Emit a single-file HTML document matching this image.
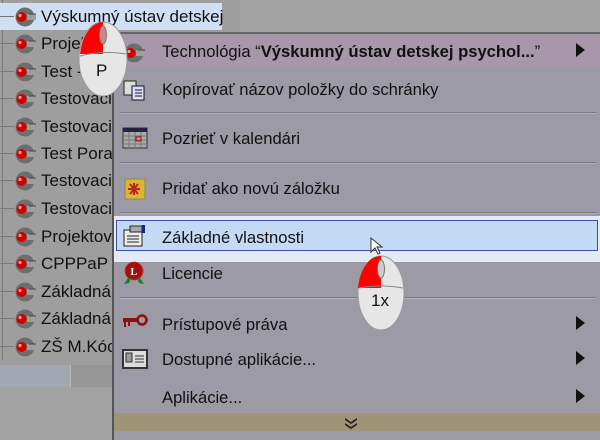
<!DOCTYPE html>
<html><head><meta charset="utf-8"><style>
body{margin:0;width:600px;height:438px;overflow:hidden;background:#a2a2a2;font-family:"Liberation Sans",sans-serif;position:relative}
.a{position:absolute}
.tree{left:0;top:0;width:240px;height:365px;background:#9e9e9e}
.row{position:absolute;left:0;height:27px;font-size:17px;color:#111;line-height:27px;white-space:nowrap}
.row .ic{position:absolute;left:13px;top:4px}
.row span{position:absolute;left:41px}
.row .ln{position:absolute;left:0;top:13px;width:14px;border-top:1px solid #777}
.menu{left:112px;top:32px;width:488px;height:406px;background:#9c9aa4;border-left:2px solid #555;border-top:2px solid #666}
.it{position:absolute;left:48px;font-size:16.6px;color:#111;white-space:nowrap}
.sep{position:absolute;left:6px;right:6px;height:0;border-top:1px solid #7a7a82;border-bottom:1px solid #b0b0b8}
.arr{position:absolute;left:462px;width:0;height:0;border-top:7px solid transparent;border-bottom:7px solid transparent;border-left:9px solid #111}
.mi{position:absolute;left:8px}
</style></head><body>
<div class="a tree"></div>
<div class="a" style="left:2px;top:0;width:1px;height:360px;background:#777"></div>
<div class="a" style="left:0;top:3px;width:222px;height:27px;background:#d0e0f4"></div>
<div class="a" style="left:0;top:365px;width:70px;height:22px;background:#a2a8b2"></div>
<div class="a" style="left:70px;top:365px;width:42px;height:22px;background:#979797;border-left:1px solid #bbb"></div>

<svg width="0" height="0" style="position:absolute"><defs>
<g id="lg"><circle cx="12" cy="10" r="9.5" fill="#6e6e6e"/><path d="M14 7h9v6h-9z" fill="#9e9e9e"/><path d="M16 7h7" stroke="#444"/><circle cx="8.5" cy="10" r="5" fill="#d00000"/><circle cx="7" cy="8.5" r="1.6" fill="#f99"/></g>
</defs></svg>

<div class="row" style="top:3px"><div class="ln"></div><svg class="ic" width="26" height="20"><use href="#lg"/></svg><span>Výskumný ústav detskej</span></div>
<div class="row" style="top:30px"><div class="ln"></div><svg class="ic" width="26" height="20"><use href="#lg"/></svg><span>Projekt</span></div>
<div class="row" style="top:58px"><div class="ln"></div><svg class="ic" width="26" height="20"><use href="#lg"/></svg><span>Test -</span></div>
<div class="row" style="top:85px"><div class="ln"></div><svg class="ic" width="26" height="20"><use href="#lg"/></svg><span>Testovaci</span></div>
<div class="row" style="top:113px"><div class="ln"></div><svg class="ic" width="26" height="20"><use href="#lg"/></svg><span>Testovaci</span></div>
<div class="row" style="top:140px"><div class="ln"></div><svg class="ic" width="26" height="20"><use href="#lg"/></svg><span>Test Pora</span></div>
<div class="row" style="top:167px"><div class="ln"></div><svg class="ic" width="26" height="20"><use href="#lg"/></svg><span>Testovaci</span></div>
<div class="row" style="top:195px"><div class="ln"></div><svg class="ic" width="26" height="20"><use href="#lg"/></svg><span>Testovaci</span></div>
<div class="row" style="top:223px"><div class="ln"></div><svg class="ic" width="26" height="20"><use href="#lg"/></svg><span>Projektov</span></div>
<div class="row" style="top:250px"><div class="ln"></div><svg class="ic" width="26" height="20"><use href="#lg"/></svg><span>CPPPaP</span></div>
<div class="row" style="top:278px"><div class="ln"></div><svg class="ic" width="26" height="20"><use href="#lg"/></svg><span>Základná</span></div>
<div class="row" style="top:305px"><div class="ln"></div><svg class="ic" width="26" height="20"><use href="#lg"/></svg><span>Základná</span></div>
<div class="row" style="top:333px"><div class="ln"></div><svg class="ic" width="26" height="20"><use href="#lg"/></svg><span>ZŠ M.Kóc</span></div>

<div class="a menu">
 <div class="a" style="left:0;top:2px;width:486px;height:32px;background:#a698a8"></div>
 <svg class="mi" style="top:9px" width="26" height="20"><use href="#lg"/></svg>
 <div class="it" style="top:8px">Technológia “<b>Výskumný ústav detskej psychol...</b>”</div>
 <div class="arr" style="top:9px"></div>
 <svg class="mi" style="top:45px" width="26" height="22"><rect x="2" y="2" width="12" height="14" fill="#ddd" stroke="#222"/><rect x="10" y="7" width="12" height="14" fill="#dde" stroke="#114"/><path d="M13 11h7M13 14h7M13 17h7" stroke="#114"/></svg>
 <div class="it" style="top:46px">Kopírovať názov položky do schránky</div>
 <div class="sep" style="top:78px"></div>
 <svg class="mi" style="top:93px" width="26" height="22"><rect x="1" y="1" width="24" height="20" fill="#aaa" stroke="#333"/><rect x="1" y="1" width="24" height="4" fill="#224"/><path d="M1 9h24M1 13h24M1 17h24M7 5v16M13 5v16M19 5v16" stroke="#777"/><rect x="14" y="10" width="5" height="4" fill="none" stroke="#b00"/></svg>
 <div class="it" style="top:95px">Pozrieť v kalendári</div>
 <div class="sep" style="top:128px"></div>
 <svg class="mi" style="top:143px" width="26" height="24"><rect x="3" y="2" width="20" height="20" fill="#d8b830" stroke="#886"/><path d="M8 7l8 10M16 7l-8 10M12 6v12M6 12h12" stroke="#c02020" stroke-width="2"/></svg>
 <div class="it" style="top:145px">Pridať ako novú záložku</div>
 <div class="sep" style="top:178px"></div>
 <div class="a" style="left:0;top:182px;width:486px;height:46px;background:#e4eaf2"></div>
 <div class="a" style="left:2px;top:186px;width:480px;height:29px;background:#c4daf4;border:1px solid #4050a8"></div>
 <svg class="mi" style="top:190px" width="26" height="24"><rect x="2" y="6" width="18" height="16" fill="#eee" stroke="#222"/><path d="M5 12h12M5 15h12M5 18h12" stroke="#222"/><rect x="8" y="2" width="12" height="6" fill="#aaa" stroke="#222"/><rect x="20" y="1" width="3" height="8" fill="#228"/></svg>
 <div class="it" style="top:194px">Základné vlastnosti</div>
 <svg class="mi" style="top:227px" width="26" height="26"><circle cx="12" cy="10" r="9" fill="#a01010" stroke="#c33" stroke-dasharray="2 1"/><text x="8.5" y="14" font-size="10" fill="#fff" font-family="Liberation Serif" font-weight="bold">L</text><path d="M6 17l-4 6 5-1 2-5M18 17l4 6-5-1-2-5" fill="#2a7a2a"/></svg>
 <div class="it" style="top:230px">Licencie</div>
 <div class="sep" style="top:263px"></div>
 <svg class="mi" style="top:280px" width="26" height="16"><rect x="1" y="4" width="16" height="4" fill="#901010"/><path d="M3 8v5M7 8v4" stroke="#901010" stroke-width="2"/><circle cx="20" cy="6" r="4.5" fill="none" stroke="#901010" stroke-width="2.5"/></svg>
 <div class="it" style="top:281px">Prístupové práva</div>
 <div class="arr" style="top:282px"></div>
 <svg class="mi" style="top:315px" width="26" height="20"><rect x="1" y="1" width="24" height="18" fill="#ddd" stroke="#333" stroke-width="2"/><rect x="4" y="4" width="6" height="9" fill="#999" stroke="#333"/><path d="M13 7h9M13 10h9M13 13h9" stroke="#333"/></svg>
 <div class="it" style="top:316px">Dostupné aplikácie...</div>
 <div class="arr" style="top:317px"></div>
 <div class="it" style="top:354px">Aplikácie...</div>
 <div class="arr" style="top:355px"></div>
 <div class="a" style="left:0;top:379px;width:486px;height:18px;background:#9e9478"></div>
 <svg class="a" style="left:230px;top:383px" width="14" height="12"><path d="M1 1l6 4 6-4v2l-6 4-6-4zM1 6l6 4 6-4v2l-6 4-6-4z" fill="#222"/></svg>
</div>

<svg class="a" style="left:76px;top:20px" width="54" height="80">
 <ellipse cx="27" cy="39" rx="24" ry="37" fill="#e6e6e6" stroke="#999"/>
 <path d="M27 2 A24 37 0 0 0 4 34 L27 34 Z" fill="#f00"/>
 <ellipse cx="27" cy="15" rx="3.5" ry="9" fill="#c88" stroke="#777"/>
 <path d="M4 36 Q27 30 50 34" stroke="#888" fill="none"/>
 <text x="20" y="56" font-size="17" font-family="Liberation Sans" fill="#111">P</text>
</svg>
<svg class="a" style="left:355px;top:254px" width="52" height="80">
 <ellipse cx="26" cy="39" rx="23" ry="37" fill="#e6e6e6" stroke="#999"/>
 <path d="M26 2 A23 37 0 0 0 3 34 L26 34 Z" fill="#f00"/>
 <ellipse cx="26" cy="15" rx="3.5" ry="9" fill="#ccc" stroke="#777"/>
 <path d="M4 34 Q26 30 48 34" stroke="#888" fill="none"/>
 <text x="16" y="52" font-size="17" font-family="Liberation Sans" fill="#111">1x</text>
</svg>
<svg class="a" style="left:370px;top:237px" width="14" height="20"><path d="M1 1v14l4-4 3 6 2-1-3-6h5z" fill="#fff" stroke="#333"/></svg>
</body></html>
